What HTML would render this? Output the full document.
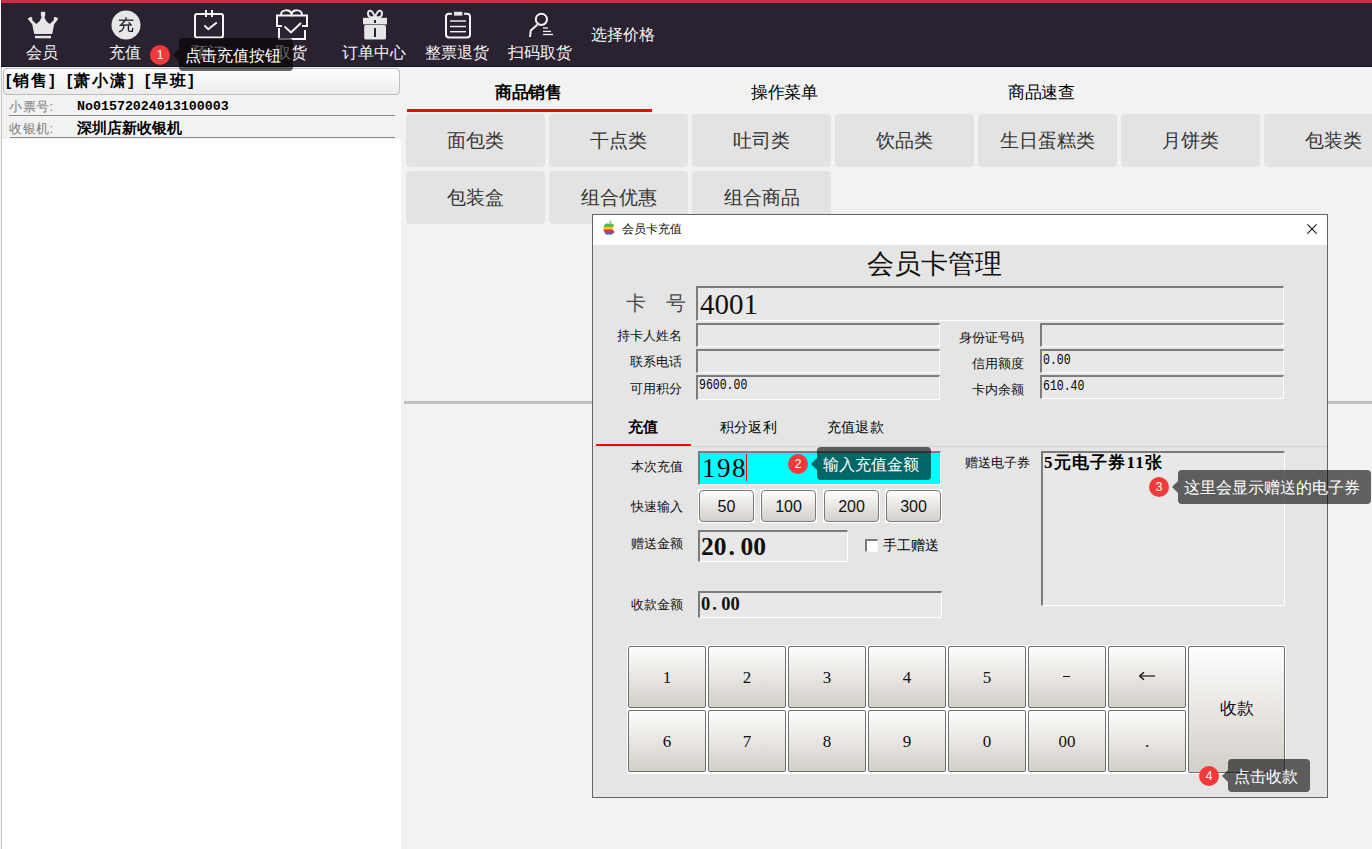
<!DOCTYPE html>
<html><head><meta charset="utf-8">
<style>
*{margin:0;padding:0;box-sizing:border-box}
html,body{width:1372px;height:849px;overflow:hidden;background:#f2f2f2;font-family:"Liberation Sans",sans-serif;color:#000}
.a{position:absolute}
i{font-style:normal;display:inline-block;width:1em;text-align:center;font-family:"Liberation Sans",sans-serif;letter-spacing:0;margin-right:var(--ls,0px)}
.c{text-align:center;white-space:nowrap}
.nw{white-space:nowrap}
.tl{color:#f4f4f4;font-size:16px;line-height:18px;text-align:center;white-space:nowrap;width:80px}
.btn{position:absolute;background:#e3e3e3;border-radius:4px;font-family:"Liberation Serif",serif;font-size:19px;color:#333;line-height:54px;text-align:center;width:139px;height:53px;overflow:hidden;white-space:nowrap}
.inp{position:absolute;border-top:2px solid #7c7c7c;border-left:2px solid #7c7c7c;border-bottom:1px solid #fff;border-right:1px solid #fff;background:#e8e8e8}
.lbl{position:absolute;font-size:13px;line-height:15px;white-space:nowrap;color:#111;text-align:right}
.np{position:absolute;background:linear-gradient(#fefefe,#efedea 35%,#d3cfc9);border:1px solid #6e6e6e;border-radius:2px;font-family:"Liberation Serif",serif;font-size:17px;text-align:center;color:#111;width:78px;height:62px;line-height:61px}
.qb{position:absolute;background:linear-gradient(#fefefe,#efedea 35%,#d3cfc9);border:1px solid #7a7a7a;border-radius:4px;font-size:16px;text-align:center;line-height:32px;color:#111;width:55px;height:32px}
.tip{position:absolute;background:rgba(0,0,0,0.6);border-radius:4px;color:#fff;font-size:16px;white-space:nowrap;text-align:left;padding-left:6px}
.tip:before{content:"";position:absolute;left:-6px;top:50%;margin-top:-6px;border-right:6px solid rgba(0,0,0,0.6);border-top:6px solid transparent;border-bottom:6px solid transparent}
.bdg{position:absolute;width:20px;height:20px;border-radius:10px;background:#f33a3a;color:#fff;font-size:12px;line-height:20px;text-align:center}
</style></head><body>

<!-- toolbar -->
<div class="a" style="left:0;top:0;width:1372px;height:67px;background:#2b2231;border-left:1px solid #fff">
  <div class="a" style="left:0;top:0;width:1371px;height:3px;background:#d22b49"></div>
  <div class="a" style="left:0;top:66px;width:1371px;height:1px;background:#17121b"></div>
</div>
<svg class="a" style="left:0;top:0" width="700" height="67" viewBox="0 0 700 67">
  <!-- crown -->
  <g fill="#e6e6e6">
    <polygon points="27.6,18.8 30.2,17 32.2,17.2 32.3,20.3 36.3,24 39.8,21 41.6,17.2 40.9,15.5 40.9,11.8 45.2,11.8 45.2,15.5 44.4,17.2 46.2,21 49.6,24 53.8,20.3 53.9,17.2 55.9,17 58.4,18.8 54.2,24.2 52.2,34 34.2,34 32.2,24.2"/>
    <rect x="35" y="35.8" width="16" height="2.5"/>
  </g>
  <!-- charge circle -->
  <circle cx="126" cy="25" r="14.5" fill="#e6e6e6"/>
  <g stroke="#1f1a24" stroke-width="1.3" fill="none" stroke-linecap="square">
    <path d="M126,18 L126,19.5"/>
    <path d="M119.5,20.2 L132.8,20.2"/>
    <path d="M124.6,21 L120.6,25.2 L130.6,24.9"/>
    <path d="M129,22.6 L131,25"/>
    <path d="M123.8,25.8 L123.6,28 Q122.5,30.5 119.6,31.6"/>
    <path d="M128.4,25.8 L128.4,30.2 Q128.6,31.4 130,31.4 L132.4,31.4 L132.6,28.6"/>
  </g>
  <!-- calendar -->
  <g stroke="#f4f4f4" stroke-width="2" fill="none">
    <rect x="195" y="14" width="28" height="23.5" rx="2"/>
    <line x1="206" y1="10" x2="206" y2="17"/><line x1="212" y1="10" x2="212" y2="17"/>
    <polyline points="204.4,25.4 208.2,29.2 216.8,22.5"/>
  </g>
  <!-- gift check -->
  <g stroke="#f4f4f4" stroke-width="2" fill="none">
    <path d="M281,15 C281,9 290,9 291.5,14 C293,9 302,9 302,15"/>
    <path d="M282,26 L277,26 L277,15.5 L307,15.5 L307,26 L302,26"/>
    <path d="M279,28 L279,39 L305,39 L305,30"/>
    <polyline points="284.5,26.5 291,32.5 301,23"/>
  </g>
  <!-- gift -->
  <g fill="#e6e6e6">
    <rect x="363" y="17.8" width="24" height="6.6"/>
    <rect x="364.2" y="25" width="21.8" height="14.6" rx="1.5"/>
  </g>
  <g stroke="#e6e6e6" stroke-width="2" fill="none">
    <path d="M375,17.5 L370,17 Q367.8,16 368,13 Q368.5,10.5 370.5,10.8 Q373,11.5 375,17.5 Q377,11.5 379.5,10.8 Q381.5,10.5 382,13 Q382.2,16 380,17 Z"/>
  </g>
  <rect x="374" y="20" width="2" height="3" fill="#2b2231"/>
  <rect x="374" y="28" width="2" height="9" fill="#2b2231"/>
  <!-- clipboard -->
  <g stroke="#f4f4f4" stroke-width="2" fill="none">
    <path d="M452,13.8 L449,13.8 Q446,13.8 446,16.8 L446,34.5 Q446,37.5 449,37.5 L467,37.5 Q470,37.5 470,34.5 L470,16.8 Q470,13.8 467,13.8 L464,13.8"/>
  </g>
  <rect x="454" y="11.8" width="8.4" height="3.8" fill="#e6e6e6"/>
  <g stroke="#f4f4f4" stroke-width="1.4">
    <line x1="450" y1="21" x2="466" y2="21"/><line x1="450" y1="26.5" x2="466" y2="26.5"/><line x1="450" y1="31.7" x2="466" y2="31.7"/>
  </g>
  <!-- person search -->
  <g stroke="#f4f4f4" stroke-width="2" fill="none">
    <circle cx="541.4" cy="19.3" r="5.6"/>
    <polyline points="537.5,24.5 530.8,30.5 530,37"/>
  </g>
  <g stroke="#f4f4f4" stroke-width="1.3">
    <line x1="543" y1="28" x2="548" y2="28"/><line x1="543" y1="31.4" x2="551" y2="31.4"/><line x1="543" y1="34.5" x2="553" y2="34.5"/>
  </g>
</svg>
<div class="a tl" style="left:2px;top:44px"><i>会</i><i>员</i></div>
<div class="a tl" style="left:85px;top:44px"><i>充</i><i>值</i></div>
<div class="a tl" style="left:168px;top:44px"><i>预</i><i>订</i></div>
<div class="a tl" style="left:251px;top:44px"><i>取</i><i>货</i></div>
<div class="a tl" style="left:334px;top:44px"><i>订</i><i>单</i><i>中</i><i>心</i></div>
<div class="a tl" style="left:417px;top:44px"><i>整</i><i>票</i><i>退</i><i>货</i></div>
<div class="a tl" style="left:500px;top:44px"><i>扫</i><i>码</i><i>取</i><i>货</i></div>
<div class="a tl" style="left:583px;top:26px"><i>选</i><i>择</i><i>价</i><i>格</i></div>

<!-- left panel -->
<div class="a" style="left:1px;top:67px;width:400px;height:782px;background:#fff;border-left:1px solid #c8c8c8">
  <div class="a" style="left:0;top:0;width:399px;height:72px;background:#f2f2f2"></div>
  <div class="a" style="left:1px;top:1px;width:397px;height:27px;border:1px solid #bdbdbd;border-radius:4px;background:linear-gradient(#ffffff,#ebebeb)"></div>
  <div class="a nw" style="left:4px;top:4px;font-size:16px;line-height:20px;font-weight:bold;letter-spacing:2px;--ls:2px">[<i>销</i><i>售</i>]</div>
  <div class="a nw" style="left:65px;top:4px;font-size:16px;line-height:20px;font-weight:bold;letter-spacing:2px;--ls:2px">[<i>萧</i><i>小</i><i>潇</i>]</div>
  <div class="a nw" style="left:143px;top:4px;font-size:16px;line-height:20px;font-weight:bold;letter-spacing:2px;--ls:2px">[<i>早</i><i>班</i>]</div>
  <div class="a nw" style="left:7px;top:32px;font-size:13px;line-height:15px;color:#7c7c7c;letter-spacing:0.5px;--ls:0.5px"><i>小</i><i>票</i><i>号</i>:</div>
  <div class="a nw" style="left:75px;top:32px;font-size:13.3px;line-height:15px;font-weight:bold;font-family:'Liberation Mono',monospace">No01572024013100003</div>
  <div class="a" style="left:7px;top:48px;width:386px;height:1px;background:#8c8c8c"></div>
  <div class="a nw" style="left:7px;top:54px;font-size:13px;line-height:15px;color:#7c7c7c;letter-spacing:0.5px;--ls:0.5px"><i>收</i><i>银</i><i>机</i>:</div>
  <div class="a nw" style="left:75px;top:52px;font-size:15px;line-height:17px;font-weight:bold"><i>深</i><i>圳</i><i>店</i><i>新</i><i>收</i><i>银</i><i>机</i></div>
  <div class="a" style="left:8px;top:70px;width:385px;height:1px;background:#8c8c8c"></div>
</div>

<!-- main tabs -->
<div class="a c" style="left:400px;top:82px;width:256px;font-size:16.5px;line-height:20px;font-weight:bold"><i>商</i><i>品</i><i>销</i><i>售</i></div>
<div class="a c" style="left:656px;top:82px;width:256px;font-size:16.5px;line-height:20px"><i>操</i><i>作</i><i>菜</i><i>单</i></div>
<div class="a c" style="left:913px;top:82px;width:256px;font-size:16.5px;line-height:20px"><i>商</i><i>品</i><i>速</i><i>查</i></div>
<div class="a" style="left:407px;top:109px;width:245px;height:3px;background:#ff0000"></div>

<div class="btn" style="left:406px;top:114px"><i>面</i><i>包</i><i>类</i></div>
<div class="btn" style="left:549px;top:114px"><i>干</i><i>点</i><i>类</i></div>
<div class="btn" style="left:692px;top:114px"><i>吐</i><i>司</i><i>类</i></div>
<div class="btn" style="left:835px;top:114px"><i>饮</i><i>品</i><i>类</i></div>
<div class="btn" style="left:978px;top:114px"><i>生</i><i>日</i><i>蛋</i><i>糕</i><i>类</i></div>
<div class="btn" style="left:1121px;top:114px"><i>月</i><i>饼</i><i>类</i></div>
<div class="btn" style="left:1264px;top:114px"><i>包</i><i>装</i><i>类</i></div>
<div class="btn" style="left:406px;top:171px"><i>包</i><i>装</i><i>盒</i></div>
<div class="btn" style="left:549px;top:171px"><i>组</i><i>合</i><i>优</i><i>惠</i></div>
<div class="btn" style="left:692px;top:171px"><i>组</i><i>合</i><i>商</i><i>品</i></div>

<div class="a" style="left:404px;top:401px;width:968px;height:3px;background:#bfbfbf"></div>

<!-- dialog -->
<div class="a" style="left:592px;top:214px;width:736px;height:584px;border:1px solid #646464;background:#e5e5e5"></div>
<div class="a" style="left:593px;top:215px;width:734px;height:30px;background:#fff"></div>
<svg class="a" style="left:600px;top:219px" width="18" height="18" viewBox="0 0 18 18">
  <defs><linearGradient id="ap" x1="0" y1="0" x2="0" y2="1">
    <stop offset="0" stop-color="#5fb847"/><stop offset="0.3" stop-color="#5fb847"/>
    <stop offset="0.3" stop-color="#f5c431"/><stop offset="0.45" stop-color="#f5c431"/>
    <stop offset="0.45" stop-color="#f07d2a"/><stop offset="0.6" stop-color="#f07d2a"/>
    <stop offset="0.6" stop-color="#d8383a"/><stop offset="0.75" stop-color="#d8383a"/>
    <stop offset="0.75" stop-color="#8e4f9f"/><stop offset="0.87" stop-color="#8e4f9f"/>
    <stop offset="0.87" stop-color="#2e9ad8"/><stop offset="1" stop-color="#2e9ad8"/>
  </linearGradient></defs>
  <path d="M9,5 C7,4 3.5,4.5 3.5,9.5 C3.5,13.5 6,16 7.5,16 C8.5,16 8.5,15.5 9,15.5 C9.5,15.5 9.5,16 10.5,16 C12,16 14,14 14.8,12.8 C13,12 12.5,10 12.8,9 C13,8 13.5,7 14.3,6.5 C13,4.5 11,4.2 9,5 Z" fill="url(#ap)"/>
  <path d="M9,4.5 C9,3 10,2 11.5,1.5 C11.5,3 10.5,4.3 9,4.5Z" fill="#5fb847"/>
</svg>
<div class="a nw" style="left:622px;top:222px;font-size:12px;line-height:14px;color:#111"><i>会</i><i>员</i><i>卡</i><i>充</i><i>值</i></div>
<svg class="a" style="left:1305px;top:223px" width="13" height="13" viewBox="0 0 13 13"><path d="M2.4,1.4 L11.6,10.6 M11.6,1.4 L2.4,10.6" stroke="#111" stroke-width="1.1"/></svg>

<div class="a c" style="left:834px;top:249px;width:200px;font-family:'Liberation Serif',serif;font-size:27px;line-height:31px;color:#111"><i>会</i><i>员</i><i>卡</i><i>管</i><i>理</i></div>

<div class="a nw" style="left:626px;top:292px;font-family:'Liberation Serif',serif;font-size:20px;line-height:22px;color:#4a4a4a;letter-spacing:0"><i>卡</i><i>&nbsp;</i><i>号</i></div>
<div class="inp" style="left:696px;top:286px;width:588px;height:35px"></div>
<div class="a nw" style="left:700px;top:289px;font-family:'Liberation Serif',serif;font-size:29px;line-height:30px;color:#111">4001</div>

<div class="lbl" style="left:600px;top:328px;width:82px"><i>持</i><i>卡</i><i>人</i><i>姓</i><i>名</i></div>
<div class="inp" style="left:696px;top:323px;width:244px;height:24px"></div>
<div class="lbl" style="left:600px;top:354px;width:82px"><i>联</i><i>系</i><i>电</i><i>话</i></div>
<div class="inp" style="left:696px;top:349px;width:244px;height:24px"></div>
<div class="lbl" style="left:600px;top:381px;width:82px"><i>可</i><i>用</i><i>积</i><i>分</i></div>
<div class="inp" style="left:696px;top:375px;width:244px;height:25px"></div>
<div class="a nw" style="left:699px;top:376px;font-family:'Liberation Mono',monospace;font-size:11.5px;line-height:14px;transform:scale(1,1.25);transform-origin:0 0;color:#000">9600.00</div>

<div class="lbl" style="left:930px;top:330px;width:94px"><i>身</i><i>份</i><i>证</i><i>号</i><i>码</i></div>
<div class="inp" style="left:1040px;top:323px;width:244px;height:24px"></div>
<div class="lbl" style="left:930px;top:356px;width:94px"><i>信</i><i>用</i><i>额</i><i>度</i></div>
<div class="inp" style="left:1040px;top:349px;width:244px;height:24px"></div>
<div class="a nw" style="left:1043px;top:351px;font-family:'Liberation Mono',monospace;font-size:11.5px;line-height:14px;transform:scale(1,1.25);transform-origin:0 0;color:#000">0.00</div>
<div class="lbl" style="left:930px;top:382px;width:94px"><i>卡</i><i>内</i><i>余</i><i>额</i></div>
<div class="inp" style="left:1040px;top:375px;width:244px;height:24px"></div>
<div class="a nw" style="left:1043px;top:377px;font-family:'Liberation Mono',monospace;font-size:11.5px;line-height:14px;transform:scale(1,1.25);transform-origin:0 0;color:#000">610.40</div>

<!-- dialog tabs -->
<div class="a" style="left:593px;top:446px;width:734px;height:1px;background:#d2d2d2"></div>
<div class="a" style="left:596px;top:444px;width:95px;height:2px;background:#f00"></div>
<div class="a nw" style="left:628px;top:418px;font-size:14.5px;line-height:18px;font-weight:bold"><i>充</i><i>值</i></div>
<div class="a nw" style="left:720px;top:418px;font-size:14px;line-height:18px;letter-spacing:0.2px;--ls:0.2px"><i>积</i><i>分</i><i>返</i><i>利</i></div>
<div class="a nw" style="left:827px;top:418px;font-size:14px;line-height:18px;letter-spacing:0.2px;--ls:0.2px"><i>充</i><i>值</i><i>退</i><i>款</i></div>

<div class="lbl" style="left:600px;top:459px;width:83px"><i>本</i><i>次</i><i>充</i><i>值</i></div>
<div class="a" style="left:698px;top:451px;width:243px;height:34px;background:#00ffff;border-top:2px solid #7c7c7c;border-left:2px solid #7c7c7c;border-bottom:1px solid #fff;border-right:1px solid #fff"></div>
<div class="a nw" style="left:702px;top:453px;font-family:'Liberation Serif',serif;font-size:27px;line-height:30px;color:#000;letter-spacing:1.5px;--ls:1.5px">198</div>
<div class="a" style="left:746px;top:454px;width:1px;height:27px;background:#f00"></div>

<div class="lbl" style="left:600px;top:499px;width:83px"><i>快</i><i>速</i><i>输</i><i>入</i></div>
<div class="a" style="left:698px;top:489px;width:57px;height:34px;background:#fff"></div>
<div class="a" style="left:760px;top:489px;width:57px;height:34px;background:#fff"></div>
<div class="a" style="left:823px;top:489px;width:57px;height:34px;background:#fff"></div>
<div class="a" style="left:885px;top:489px;width:57px;height:34px;background:#fff"></div>
<div class="qb" style="left:699px;top:490px">50</div>
<div class="qb" style="left:761px;top:490px">100</div>
<div class="qb" style="left:824px;top:490px">200</div>
<div class="qb" style="left:886px;top:490px">300</div>

<div class="lbl" style="left:600px;top:536px;width:83px"><i>赠</i><i>送</i><i>金</i><i>额</i></div>
<div class="inp" style="left:698px;top:530px;width:150px;height:32px"></div>
<div class="a nw" style="left:701px;top:533px;font-family:'Liberation Serif',serif;font-size:25.5px;line-height:28px;color:#111;font-weight:bold">20<span style="display:inline-block;width:14px;padding-left:2px">.</span>00</div>
<div class="a" style="left:865px;top:539px;width:13px;height:13px;background:#fff;border-top:2px solid #7a7a7a;border-left:2px solid #7a7a7a;border-right:1px solid #f6f6f6;border-bottom:1px solid #f6f6f6"></div>
<div class="a nw" style="left:883px;top:537px;font-size:14px;line-height:16px"><i>手</i><i>工</i><i>赠</i><i>送</i></div>

<div class="lbl" style="left:600px;top:597px;width:83px"><i>收</i><i>款</i><i>金</i><i>额</i></div>
<div class="inp" style="left:698px;top:591px;width:244px;height:27px"></div>
<div class="a nw" style="left:701px;top:594px;font-family:'Liberation Serif',serif;font-size:18.5px;line-height:20px;color:#111;font-weight:bold">0<span style="display:inline-block;width:11px;padding-left:2px">.</span>00</div>

<div class="lbl" style="left:930px;top:455px;width:100px"><i>赠</i><i>送</i><i>电</i><i>子</i><i>券</i></div>
<div class="inp" style="left:1041px;top:451px;width:244px;height:155px"></div>
<div class="a nw" style="left:1044px;top:453px;font-family:'Liberation Serif',serif;font-size:17px;line-height:20px;font-weight:bold;letter-spacing:1.2px;--ls:1.2px">5<i>元</i><i>电</i><i>子</i><i>券</i>11<i>张</i></div>

<!-- numpad -->
<div class="a" style="left:627px;top:645px;width:659px;height:129px;background:#fff"></div>
<div class="np" style="left:628px;top:646px">1</div>
<div class="np" style="left:708px;top:646px">2</div>
<div class="np" style="left:788px;top:646px">3</div>
<div class="np" style="left:868px;top:646px">4</div>
<div class="np" style="left:948px;top:646px">5</div>
<div class="np" style="left:1028px;top:646px"><div class="a" style="left:34px;top:28.5px;width:7px;height:1.5px;background:#111"></div></div>
<div class="np" style="left:1108px;top:646px"><svg class="a" style="left:29px;top:23px" width="18" height="12" viewBox="0 0 18 12"><path d="M2,6 L17,6" stroke="#111" stroke-width="1.2"/><path d="M1.5,6 L6,2.2 M1.5,6 L6,9.8" stroke="#111" stroke-width="1.5" fill="none"/></svg></div>
<div class="np" style="left:628px;top:710px">6</div>
<div class="np" style="left:708px;top:710px">7</div>
<div class="np" style="left:788px;top:710px">8</div>
<div class="np" style="left:868px;top:710px">9</div>
<div class="np" style="left:948px;top:710px">0</div>
<div class="np" style="left:1028px;top:710px">00</div>
<div class="np" style="left:1108px;top:710px">.</div>
<div class="np" style="left:1188px;top:646px;width:97px;height:127px;line-height:124px;font-family:'Liberation Sans',sans-serif"><i>收</i><i>款</i></div>

<!-- tooltips -->
<div class="tip" style="left:179px;top:38px;width:114px;height:33px;line-height:35px"><i>点</i><i>击</i><i>充</i><i>值</i><i>按</i><i>钮</i></div>
<div class="bdg" style="left:150px;top:45px">1</div>
<div class="tip" style="left:817px;top:447px;width:114px;height:33px;line-height:35px"><i>输</i><i>入</i><i>充</i><i>值</i><i>金</i><i>额</i></div>
<div class="bdg" style="left:788px;top:454px">2</div>
<div class="tip" style="left:1178px;top:470px;width:193px;height:34px;line-height:36px"><i>这</i><i>里</i><i>会</i><i>显</i><i>示</i><i>赠</i><i>送</i><i>的</i><i>电</i><i>子</i><i>券</i></div>
<div class="bdg" style="left:1149px;top:477px">3</div>
<div class="tip" style="left:1228px;top:759px;width:82px;height:33px;line-height:35px"><i>点</i><i>击</i><i>收</i><i>款</i></div>
<div class="bdg" style="left:1199px;top:766px">4</div>

</body></html>
